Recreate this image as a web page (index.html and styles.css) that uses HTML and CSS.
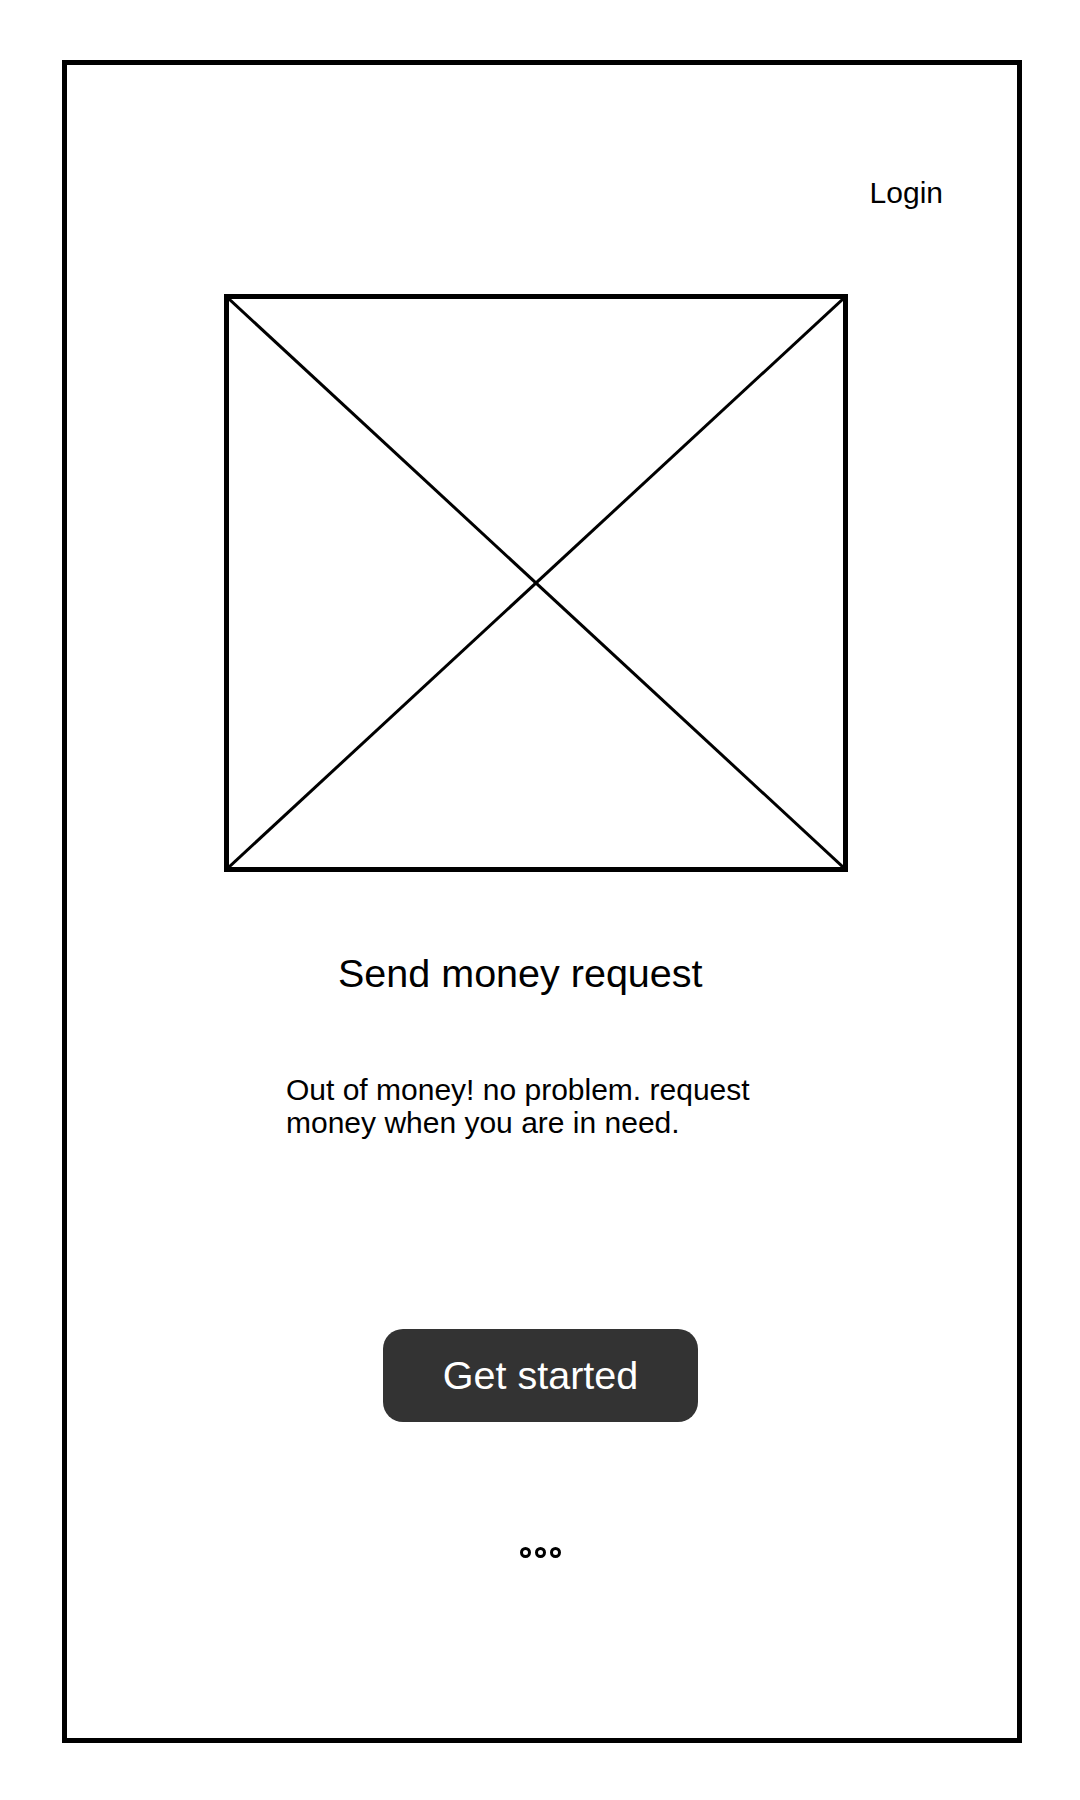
FILE: index.html
```html
<!DOCTYPE html>
<html lang="en">
<head>
<meta charset="utf-8">
<title>Send money request</title>
<link rel="stylesheet" href="styles.css">
</head>
<body>
<div class="frame">
  <div class="header"><span class="login">Login</span></div>
  <div class="placeholder">
    <svg class="cross" viewBox="0 0 100 100" preserveAspectRatio="none">
      <line x1="0" y1="0" x2="100" y2="100" vector-effect="non-scaling-stroke"/>
      <line x1="100" y1="0" x2="0" y2="100" vector-effect="non-scaling-stroke"/>
    </svg>
  </div>
  <h1 class="title">Send money request</h1>
  <p class="desc">Out of money! no problem. request money when you are in need.</p>
  <button class="cta">Get started</button>
  <div class="dots"><span class="dot"></span><span class="dot"></span><span class="dot"></span></div>
</div>
</body>
</html>
```
FILE: styles.css
```css
html, body {
  margin: 0;
  padding: 0;
  background: #fff;
}
body {
  font-family: "Liberation Sans", Arial, sans-serif;
  color: #000;
  padding-top: 60px;
  padding-left: 62px;
}
.frame {
  box-sizing: border-box;
  width: 960px;
  height: 1683px;
  border: 5px solid #000;
  display: flex;
  flex-direction: column;
  align-items: flex-start;
}
.header {
  align-self: stretch;
  display: flex;
  justify-content: flex-end;
  padding-top: 111px;
  padding-right: 74px;
}
.login {
  font-size: 30px;
  line-height: 34px;
}
.placeholder {
  box-sizing: border-box;
  width: 624px;
  height: 578px;
  margin-top: 84px;
  margin-left: 157px;
  border: 5px solid #000;
  display: flex;
}
.cross {
  width: 100%;
  height: 100%;
  display: block;
}
.cross line {
  stroke: #000;
  stroke-width: 3;
}
.title {
  margin: 79px 0 0 271px;
  font-size: 39.5px;
  line-height: 44px;
  font-weight: normal;
}
.desc {
  margin: 78px 0 0 219px;
  width: 480px;
  font-size: 30px;
  line-height: 33px;
}
.cta {
  margin: 190px 0 0 316px;
  width: 315px;
  height: 93px;
  border: none;
  border-radius: 20px;
  background: #333;
  color: #fff;
  font-family: "Liberation Sans", Arial, sans-serif;
  font-size: 39.5px;
  padding: 0;
  display: flex;
  align-items: center;
  justify-content: center;
}
.dots {
  margin: 125px 0 0 453px;
  display: flex;
  gap: 4px;
}
.dot {
  box-sizing: border-box;
  width: 11px;
  height: 11px;
  border: 3px solid #000;
  border-radius: 50%;
}
```
